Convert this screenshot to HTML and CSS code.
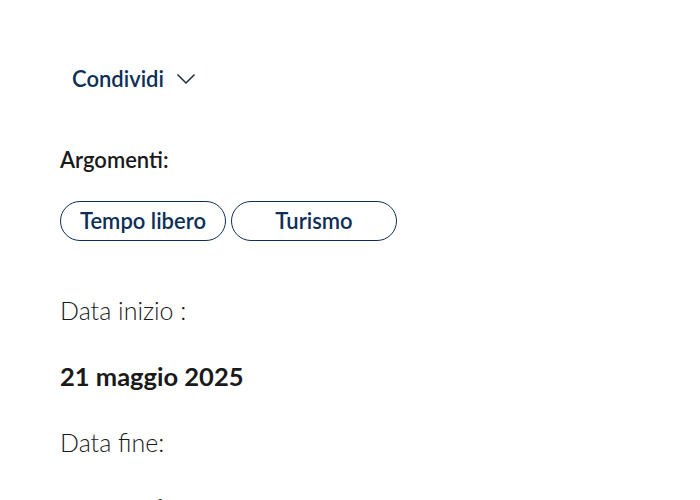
FILE: index.html
```html
<!DOCTYPE html>
<html lang="it">
<head>
  <meta charset="UTF-8" />
  <meta name="viewport" content="width=device-width, initial-scale=1.0"/>
  <title>Evento</title>
  <link rel="stylesheet" href="styles.css">
</head>
<body>
  <main class="page">
    <div class="share">
      <button class="share-btn">Condividi
        <svg width="20" height="12" viewBox="0 0 20 12"><path d="M1.5 1.5 L10 10 L18.5 1.5" fill="none" stroke="#1a2b3c" stroke-width="1.5"/></svg>
      </button>
    </div>

    <section class="topics">
      <h3>Argomenti:</h3>
      <div class="chips">
        <a class="chip" href="#">Tempo libero</a>
        <a class="chip" href="#">Turismo</a>
      </div>
    </section>

    <section class="dates">
      <p class="label">Data inizio :</p>
      <p class="value">21 maggio 2025</p>
      <p class="label">Data fine:</p>
      <p class="value">21 maggio 2025</p>
    </section>
  </main>
</body>
</html>
```
FILE: styles.css
```css
body {
  font-family: 'Lato', 'Noto Sans', sans-serif;
  background-color: #fff;
  color: #1a1a1a;
  margin: 0;
}
.page {
  padding: 65px 60px 0 60px;
}
.share-btn {
  display: flex;
  align-items: center;
  gap: 12px;
  background: none;
  border: none;
  padding: 0 0 0 12px;
  font-family: inherit;
  font-size: 22px;
  font-weight: 600;
  color: #0d2f57;
  cursor: pointer;
}
.topics h3 {
  margin: 55px 0 0 0;
  font-size: 22px;
  font-weight: 600;
  line-height: 26px;
}
.chips {
  display: flex;
  gap: 5px;
  margin-top: 28px;
}
.chip {
  display: block;
  width: 164px;
  height: 38px;
  line-height: 38px;
  text-align: center;
  border: 1px solid #0d2f57;
  border-radius: 20px;
  text-decoration: none;
  color: #0d2f57;
  font-size: 22px;
  font-weight: 600;
}
.dates {
  margin-top: 53px;
}
.dates p {
  margin: 0;
  line-height: 32px;
}
.label {
  font-size: 25px;
  font-weight: 300;
  margin-bottom: 34px !important;
}
.value {
  font-size: 25.5px;
  font-weight: 700;
  margin-bottom: 34px !important;
}
```
